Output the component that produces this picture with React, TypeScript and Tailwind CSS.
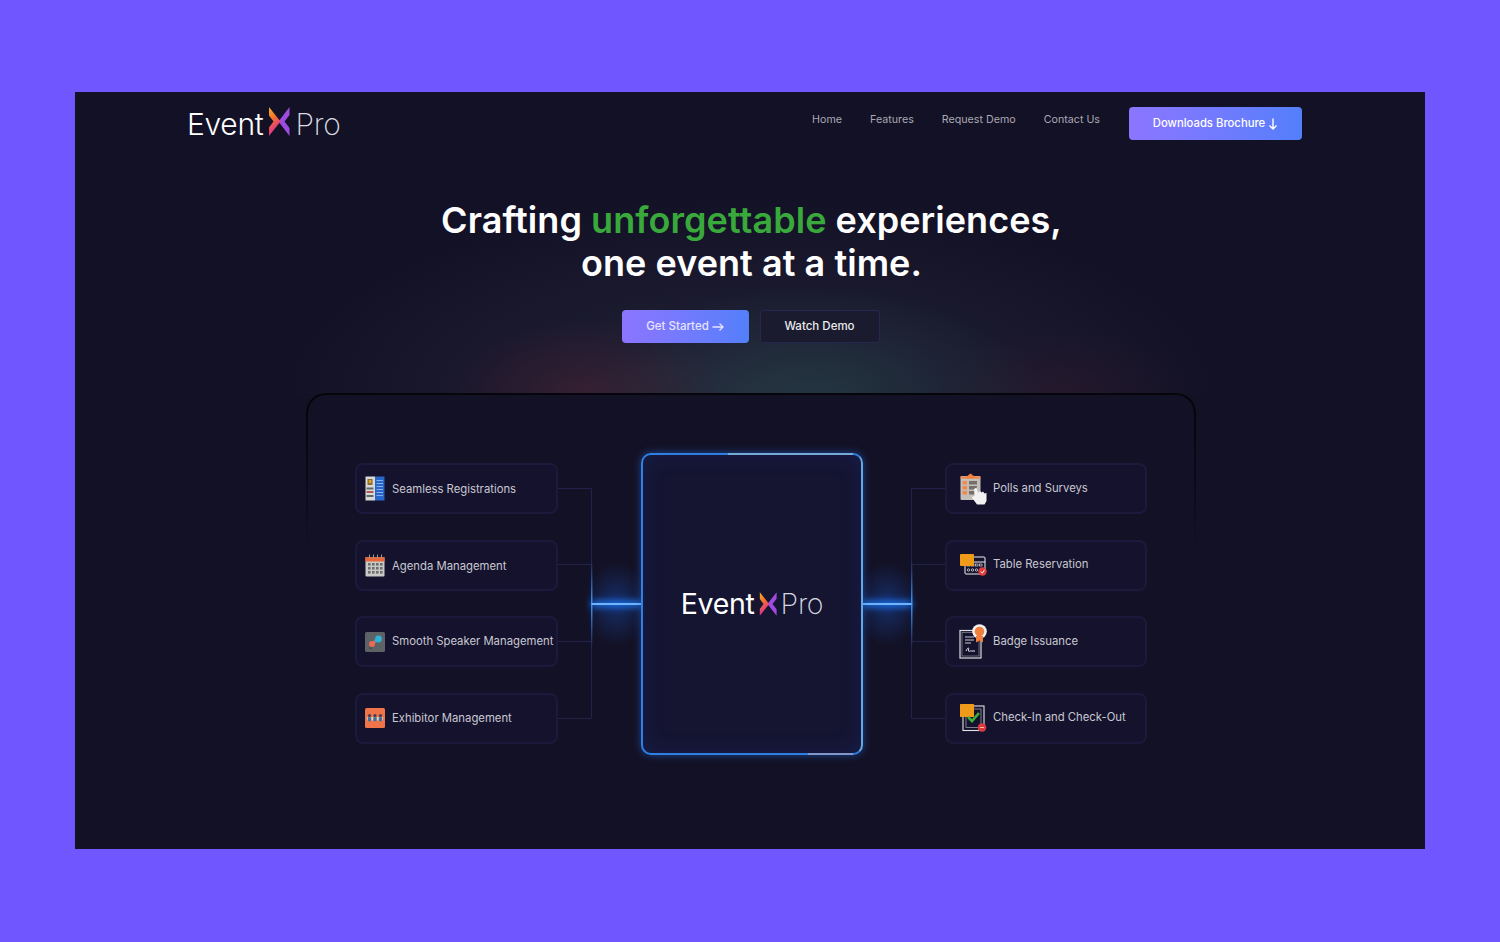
import type { ReactNode } from "react"

const font = { sans: "font-['Inter','Noto_Sans',sans-serif]" }

function LogoMark({ className, id }: { className: string; id: string }) {
    return (
        <svg className={className} viewBox="0 0 22 29" fill="none">
            <defs>
                <linearGradient id={id} x1="0" y1="0" x2="0.3" y2="1">
                    <stop offset="0" stopColor="#f7b32b" />
                    <stop offset="0.45" stopColor="#f2702c" />
                    <stop offset="1" stopColor="#d9259f" />
                </linearGradient>
            </defs>
            <path d="M21.5 0 L21.5 8 L16.5 14.5 L21.5 21 L21.5 29 L12 16.5 L10 14.5 L12 12.5 Z" fill="#a04be0" />
            <path d="M1 0 L12.5 14.5 L1 29 L1 20.5 L5.5 14.5 L1 8.5 Z" fill={`url(#${id})`} />
        </svg>
    )
}

function SeamlessIcon() {
    return (
        <svg className="w-[20px] h-[25px]" viewBox="0 0 20 25">
            <rect x="0.5" y="0.5" width="9.5" height="24" fill="#d8d8d6" />
            <rect x="10" y="0.5" width="9.5" height="24" fill="#2a66c8" />
            <rect x="2.5" y="3" width="5" height="6" fill="#8a6a2f" />
            <rect x="3.8" y="4" width="2.4" height="3" fill="#e0a52c" />
            <rect x="1.5" y="11.5" width="7" height="2" fill="#5d6b66" />
            <rect x="1.5" y="15" width="7" height="2" fill="#b45a55" />
            <rect x="1.5" y="19" width="7" height="2" fill="#5d6b66" />
            {[4, 7, 10, 13, 16, 19].map((y) => (
                <rect key={y} x="11.5" y={y} width="6.5" height="1" fill="#7fb0f0" />
            ))}
        </svg>
    )
}

function AgendaIcon() {
    const cols = [3, 7, 11, 15]
    const rows = [9, 13, 17]
    return (
        <svg className="w-[20px] h-[23px]" viewBox="0 0 20 23">
            <rect x="0.5" y="3" width="19" height="19.5" rx="1" fill="#c9c9c6" />
            <rect x="0.5" y="3" width="19" height="4.5" fill="#e8673a" />
            {[4, 8, 12, 16].map((x) => (
                <rect key={x} x={x} y="0.5" width="1" height="4" fill="#9a9a98" />
            ))}
            {rows.map((y) =>
                cols.map((x) => <rect key={`${x}-${y}`} x={x} y={y} width="2.6" height="2.6" fill="#6d6f70" />),
            )}
        </svg>
    )
}

function SpeakerIcon() {
    return (
        <svg className="w-[20px] h-[20px]" viewBox="0 0 20 20">
            <rect width="20" height="20" rx="1.5" fill="#5c6266" />
            <path d="M7 12 L13 7" stroke="#7a8a90" strokeWidth="3" />
            <circle cx="13.5" cy="7" r="3.4" fill="#2fb4d6" />
            <circle cx="7" cy="12" r="3" fill="#ee6a55" />
            <rect x="4" y="15.5" width="3" height="1.2" fill="#41474a" />
        </svg>
    )
}

function ExhibitorIcon() {
    return (
        <svg className="w-[20px] h-[20px]" viewBox="0 0 20 20">
            <rect width="20" height="20" rx="1.5" fill="#f0744a" />
            <rect x="2" y="9" width="16" height="3.5" fill="#f6c9a8" />
            {[4.5, 10, 15.5].map((x) => (
                <g key={x}>
                    <circle cx={x} cy="7.6" r="1.6" fill="#4a3a52" />
                    <rect x={x - 1.7} y="9.2" width="3.4" height="4" fill="#3f6f9c" />
                </g>
            ))}
        </svg>
    )
}

function PollsIcon() {
    return (
        <svg className="w-[27px] h-[32px]" viewBox="0 0 27 32">
            <rect x="0.5" y="3" width="20" height="24" rx="1" fill="#c4bebb" />
            <path d="M6.5 3.5 L10.5 0.5 L14.5 3.5 L14.5 5.5 L6.5 5.5 Z" fill="#f0803c" />
            <rect x="0.5" y="3.5" width="20" height="2" fill="#f0803c" />
            {[8, 13, 18].map((y) => (
                <g key={y}>
                    <rect x="2.5" y={y} width="4.5" height="3.5" fill="#ef8a4a" />
                    <rect x="9" y={y} width="8" height="3.5" fill="#76706d" />
                </g>
            ))}
            <path d="M14 16 L16.5 14.5 L18 20 L20 18 L21.5 19.5 L23 18.5 L24.5 20.5 L26.5 20 L26.5 28 L24.5 31.5 L17 31.5 L11.5 24 L14.5 23 Z" fill="#f2f2f2" />
        </svg>
    )
}

function TableIcon() {
    return (
        <svg className="w-[27px] h-[22px]" viewBox="0 0 27 22" fill="none">
            <rect x="5" y="3" width="20" height="17" rx="1" stroke="#f0f0f4" strokeWidth="1" />
            <path d="M5 8 H25" stroke="#f0f0f4" />
            {[7.5, 11.5, 15.5, 19.5].map((x) => (
                <g key={x}>
                    <rect x={x} y="10" width="2.5" height="2" stroke="#f0f0f4" strokeWidth="0.6" />
                    <circle cx={x + 1} cy="16" r="1.2" stroke="#f0f0f4" strokeWidth="0.7" />
                </g>
            ))}
            <rect x="0" y="0" width="14" height="12" rx="1" fill="#f09a1a" />
            <circle cx="22.5" cy="17.5" r="4.2" fill="#e23d3d" />
            <path d="M20.8 17.5 L22.3 19.2 L24.6 15.8" stroke="#fff" strokeWidth="0.9" />
        </svg>
    )
}

function BadgeIcon() {
    return (
        <svg className="w-[28px] h-[35px]" viewBox="0 0 28 35" fill="none">
            <rect x="1" y="6.5" width="21" height="27.5" stroke="#dcdce2" strokeWidth="1.2" />
            <rect x="3" y="8.5" width="17" height="23.5" stroke="#8f8f98" strokeWidth="0.7" />
            <path d="M6 13 H15 M6 16 H15 M6 19 H12" stroke="#c9c9d0" strokeWidth="1" />
            <path d="M7 27 C9 23 10 23 9.5 26 C9 29 12 26 12.5 27 L16 27" stroke="#e8e8ee" strokeWidth="1" />
            <circle cx="20.5" cy="7.5" r="7.3" fill="#f2f2f2" />
            <path d="M17 12 L17 18.5 L20.5 16.5 L24 18.5 L24 12 Z" fill="#f0803c" />
            <circle cx="20.5" cy="7.5" r="4.8" fill="#f0803c" />
        </svg>
    )
}

function CheckInIcon() {
    return (
        <svg className="w-[27px] h-[28px]" viewBox="0 0 27 28" fill="none">
            <rect x="3" y="2" width="21" height="24.5" stroke="#e3e3e8" strokeWidth="1.1" />
            <rect x="6" y="5" width="15" height="18.5" stroke="#9b9ba4" strokeWidth="0.8" />
            <rect x="0" y="0" width="14" height="13" rx="0.5" fill="#f09a1a" />
            <path d="M8 13 L12 17 L19 9" stroke="#3fae3a" strokeWidth="2.6" />
            <circle cx="22" cy="23.5" r="4.3" fill="#d93a3f" />
            <path d="M20 23.5 H24" stroke="#f3b9b9" strokeWidth="1" />
        </svg>
    )
}

function FeatureCard({ icon, label, right, nudge = "" }: { icon: ReactNode; label: string; right?: boolean; nudge?: string }) {
    return (
        <div className={`flex items-center h-[51px] rounded-lg border-2 border-[#1c1a3c] bg-[#14122c] ${right ? "pl-[12px]" : "pl-[8px]"}`}>
            <span className={`flex justify-center shrink-0 ${right ? "w-[28px] mr-[6px]" : "w-[20px] mr-[7px]"}`}>{icon}</span>
            <span className={`text-[11.3px] leading-none whitespace-nowrap text-[#c9c8d2] ${nudge}`}>{label}</span>
        </div>
    )
}

function Connector({ side }: { side: "left" | "right" }) {
    const trunk = side === "left" ? 33.5 : 48.5
    const outer = side === "left" ? 0 : 82
    const inner = side === "left" ? 83 : 0
    return (
        <svg className={`h-[301px] shrink-0 overflow-visible ${side === "left" ? "w-[83px]" : "w-[82px]"}`} viewBox={side === "left" ? "0 0 83 301" : "0 0 82 301"} fill="none">
            <defs>
                <filter id={`blur-${side}`} filterUnits="userSpaceOnUse" x="0" y="120" width="83" height="60">
                    <feGaussianBlur stdDeviation="3.5" />
                </filter>
                <radialGradient id={`halo-${side}`}>
                    <stop offset="0" stopColor="#1a5ad0" stopOpacity="0.4" />
                    <stop offset="1" stopColor="#1a5ad0" stopOpacity="0" />
                </radialGradient>
                <linearGradient id={`trunk-${side}`} x1="0" y1="0" x2="0" y2="1">
                    <stop offset="0" stopColor="#2a7fe8" stopOpacity="0" />
                    <stop offset="0.5" stopColor="#3f97f5" />
                    <stop offset="1" stopColor="#2a7fe8" stopOpacity="0" />
                </linearGradient>
            </defs>
            <path d={`M${outer} 35.5 H${trunk} M${outer} 111.5 H${trunk} M${outer} 188.5 H${trunk} M${outer} 265.5 H${trunk} M${trunk} 35.5 V265.5`} stroke="#24214a" />
            <ellipse cx={(trunk + inner) / 2} cy="151" rx="32" ry="42" fill={`url(#halo-${side})`} />
            <rect x={trunk - 0.5} y="106" width="1.5" height="90" fill={`url(#trunk-${side})`} />
            <path d={`M${trunk} 151 H${inner}`} stroke="#1e78ff" strokeWidth="6" filter={`url(#blur-${side})`} />
            <path d={`M${trunk} 151 H${inner}`} stroke="#6db4ff" strokeWidth="2" />
        </svg>
    )
}

export default function App() {
    return (
        <div className={`min-h-screen bg-[#6f56ff] pt-[92px] px-[75px] ${font.sans}`}>
            <div className="relative h-[757px] bg-[#131125] overflow-hidden">
                {/* glow behind the panel */}
                <div className="absolute left-[75px] top-[80px] w-[1200px] h-[222px] bg-[radial-gradient(ellipse_140px_75px_at_36%_100%,rgba(110,35,50,0.3),transparent),radial-gradient(ellipse_130px_70px_at_76%_100%,rgba(110,35,50,0.14),transparent),radial-gradient(ellipse_220px_110px_at_56%_100%,rgba(40,95,85,0.3),transparent),radial-gradient(ellipse_480px_200px_at_50%_100%,rgba(70,80,100,0.32)_0%,rgba(60,65,90,0.16)_55%,transparent_100%)]" />

                <header className="relative flex items-start justify-between pl-[112px] pr-[123px] pt-[15px]">
                    <div className="flex items-center h-[33px] text-[30px] font-light text-white leading-none tracking-[-0.3px]">
                        <span>Event</span>
                        <LogoMark id="logo-top" className="w-[22px] h-[29px] mx-[5px] mb-[4px]" />
                        <span className="text-[#dcdce2] font-extralight">Pro</span>
                    </div>
                    <nav className="flex items-start">
                        <div className="flex items-center gap-[28px] h-[27px] text-[10.7px] text-[#a9a8b4] mr-[29px]">
                            <a>Home</a>
                            <a>Features</a>
                            <a>Request Demo</a>
                            <a>Contact Us</a>
                        </div>
                        <button className="flex items-center justify-center gap-[3px] w-[173px] h-[33px] rounded-[4px] text-[11.3px] font-medium text-white bg-gradient-to-r from-[#8b75ff] to-[#537ffb]">
                            Downloads Brochure
                            <svg className="w-[10px] h-[12px]" viewBox="0 0 10 12" fill="none" stroke="currentColor" strokeWidth="1.4">
                                <path d="M5 0.5 V11 M1.5 7.5 L5 11 L8.5 7.5" />
                            </svg>
                        </button>
                    </nav>
                </header>

                <section className="relative flex flex-col items-center mt-[59px] pl-[3px]">
                    <h1 className="text-[36px] leading-[43px] font-semibold text-white text-center tracking-[0.05px]">
                        Crafting <span className="text-[#39a93c]">unforgettable</span> experiences,
                        <br />
                        one event at a time.
                    </h1>
                    <div className="flex gap-[11px] mt-[25px] mr-[2px]">
                        <button className="flex items-center justify-center gap-[3px] w-[127px] h-[33px] rounded-[4px] text-[11.5px] font-medium text-[#e6e3ff] bg-gradient-to-r from-[#8b75ff] to-[#537ffb]">
                            Get Started
                            <svg className="w-[12px] h-[10px]" viewBox="0 0 12 10" fill="none" stroke="currentColor" strokeWidth="1.3">
                                <path d="M0.5 5 H11 M7.5 1.5 L11 5 L7.5 8.5" />
                            </svg>
                        </button>
                        <button className="w-[120px] h-[33px] rounded-[3px] border border-[#272652] bg-[#1a1b2e] text-[11.5px] font-medium text-[#ebebee]">
                            Watch Demo
                        </button>
                    </div>
                </section>

                {/* panel edge fades out going down */}
                <section className="relative ml-[231px] w-[890px] mt-[50px] h-[460px] rounded-t-[20px] bg-gradient-to-b from-[#06050c] from-[5%] to-[#131125] to-[35%] p-[2px] pb-0">
                    <div className="h-full rounded-t-[18px] bg-[#131125] pt-[58px] pl-[47px]">
                        <div className="flex">
                            <div className="flex flex-col justify-between w-[203px] pt-[10px] pb-[11px] shrink-0">
                                <FeatureCard icon={<SeamlessIcon />} label="Seamless Registrations" nudge="mt-[3px]" />
                                <FeatureCard icon={<AgendaIcon />} label="Agenda Management" nudge="mt-[2px]" />
                                <FeatureCard icon={<SpeakerIcon />} label="Smooth Speaker Management" />
                                <FeatureCard icon={<ExhibitorIcon />} label="Exhibitor Management" />
                            </div>
                            <Connector side="left" />
                            <div className="relative flex items-center justify-center w-[222px] h-[302px] shrink-0 rounded-[10px] border-2 border-[#2f80e4] border-r-[#62a7e6] bg-[#151431] shadow-[0_0_9px_rgba(40,120,240,0.5),inset_0_0_22px_rgba(30,90,200,0.16)]">
                                <div className="absolute -top-[2px] left-[85px] right-[8px] h-[2px] bg-[#74a9d8]" />
                                <div className="absolute -bottom-[2px] left-[165px] right-[8px] h-[2px] bg-[#7f96cc]" />
                                <div className="flex items-center text-[28.5px] text-white font-normal leading-none tracking-[-0.3px]">
                                    <span>Event</span>
                                    <LogoMark id="logo-mid" className="w-[18px] h-[24px] mx-[4px]" />
                                    <span className="text-[#d8d8e0] font-extralight">Pro</span>
                                </div>
                            </div>
                            <Connector side="right" />
                            <div className="flex flex-col justify-between w-[202px] pt-[10px] pb-[11px] shrink-0">
                                <FeatureCard right icon={<PollsIcon />} label="Polls and Surveys" />
                                <FeatureCard right icon={<TableIcon />} label="Table Reservation" nudge="mb-[2px]" />
                                <FeatureCard right icon={<BadgeIcon />} label="Badge Issuance" />
                                <FeatureCard right icon={<CheckInIcon />} label="Check-In and Check-Out" nudge="mb-[2px]" />
                            </div>
                        </div>
                    </div>
                </section>
            </div>
        </div>
    )
}
